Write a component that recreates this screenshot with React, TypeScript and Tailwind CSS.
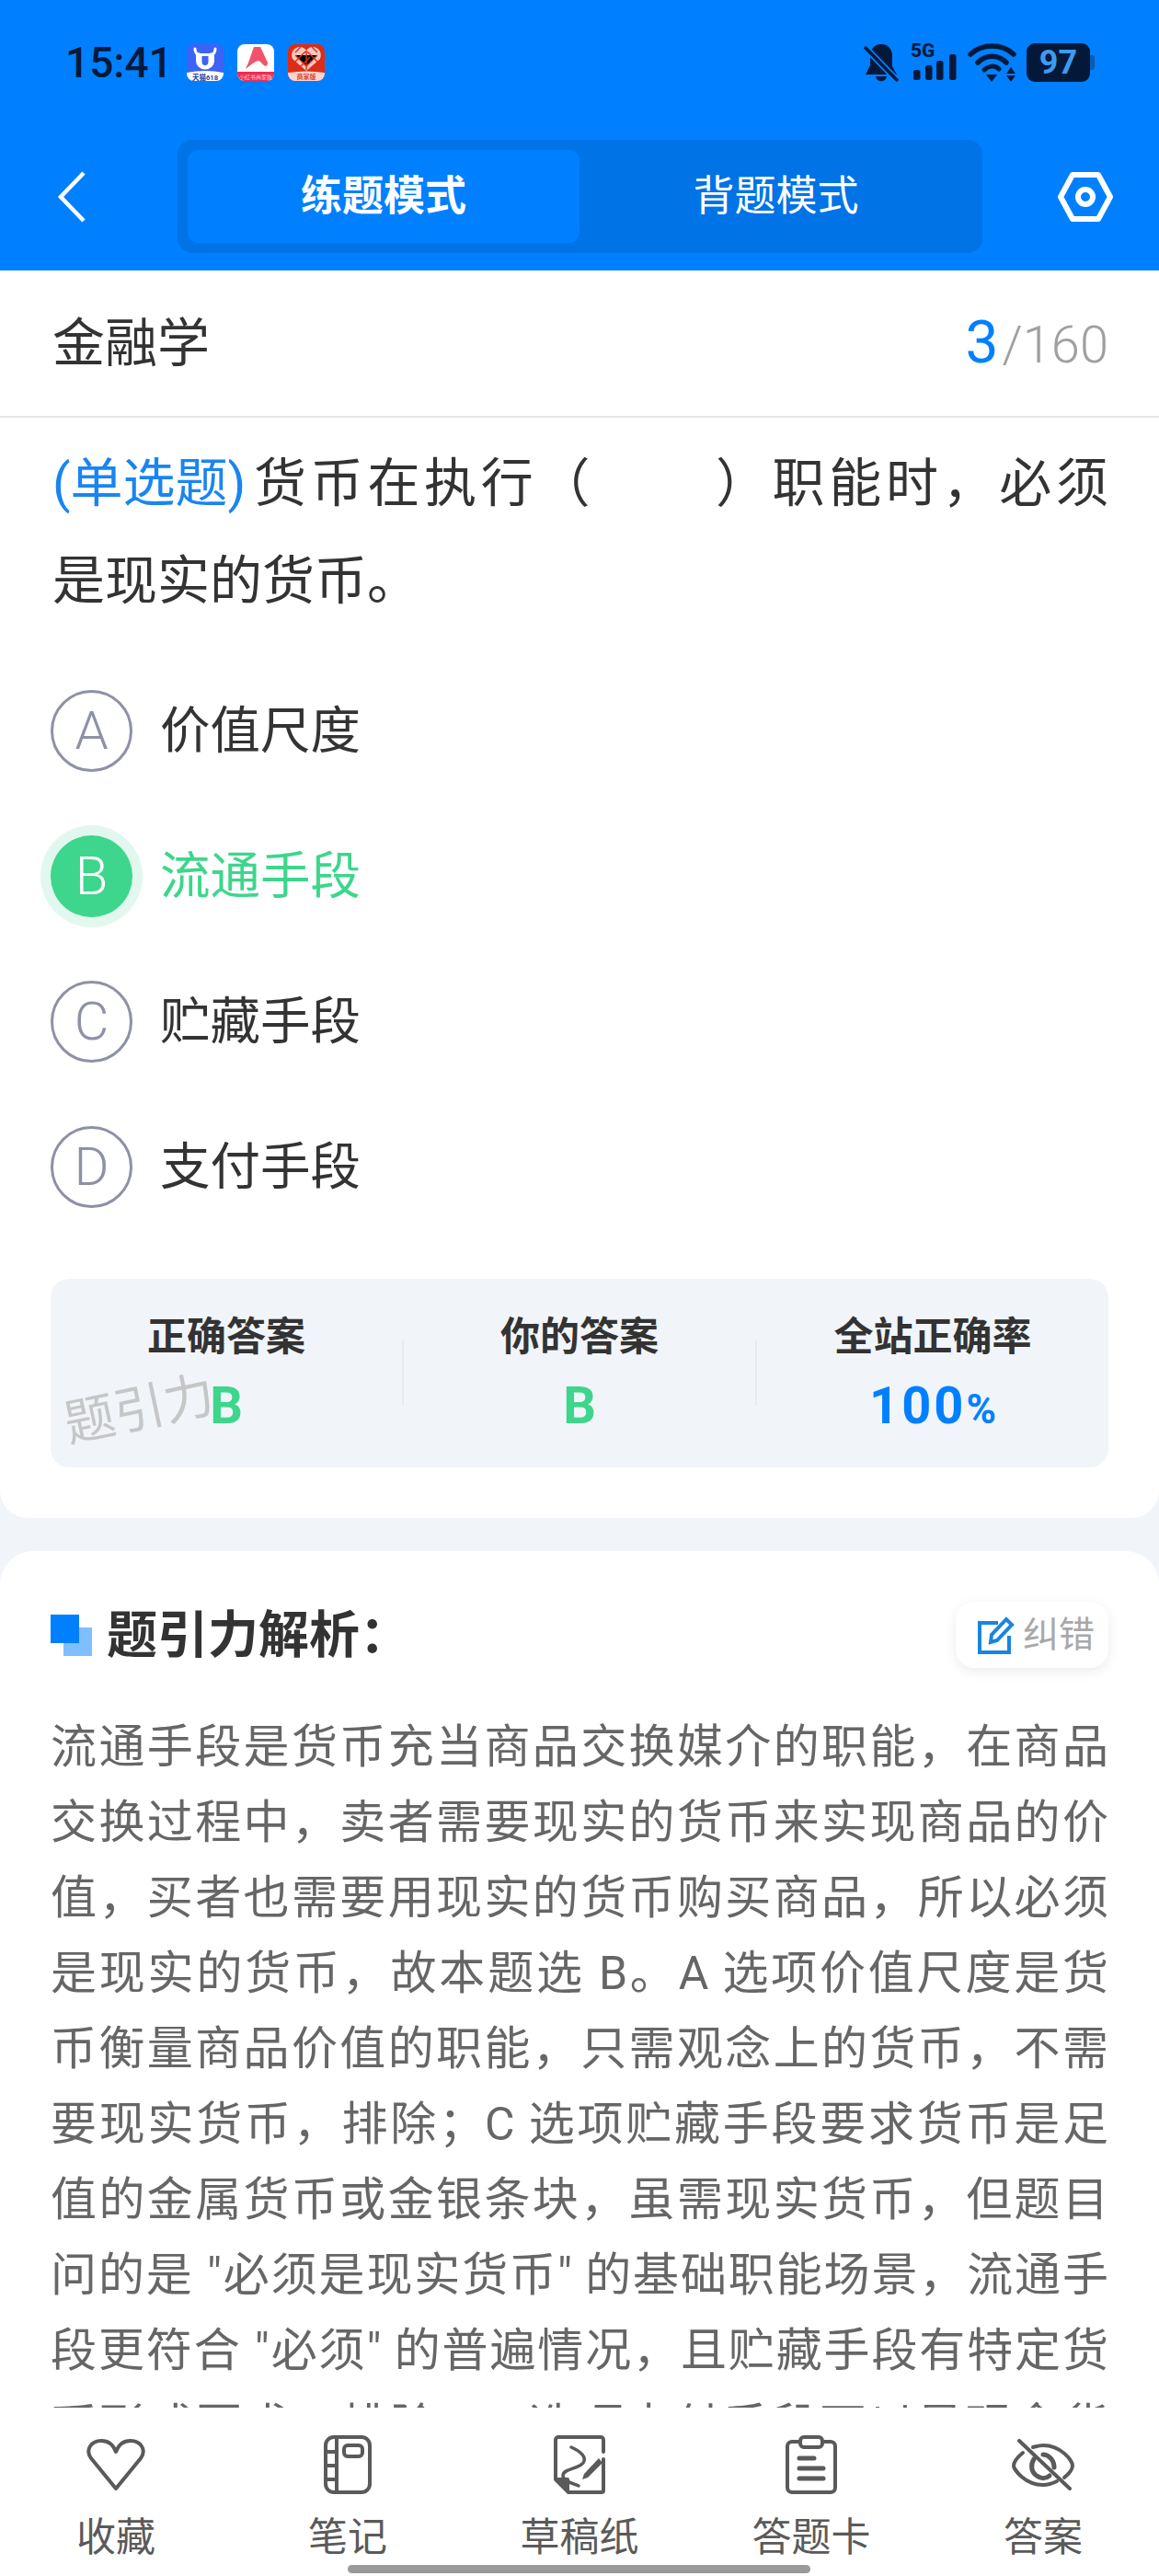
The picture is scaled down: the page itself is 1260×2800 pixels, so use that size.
import React from "react";

const explanation = [
  "流通手段是货币充当商品交换媒介的职能，在商品",
  "交换过程中，卖者需要现实的货币来实现商品的价",
  "值，买者也需要用现实的货币购买商品，所以必须",
  "是现实的货币，故本题选 B。A 选项价值尺度是货",
  "币衡量商品价值的职能，只需观念上的货币，不需",
  "要现实货币，排除；C 选项贮藏手段要求货币是足",
  "值的金属货币或金银条块，虽需现实货币，但题目",
  "问的是 \"必须是现实货币\" 的基础职能场景，流通手",
  "段更符合 \"必须\" 的普遍情况，且贮藏手段有特定货",
  "币形式要求，排除；D 选项支付手段可以是观念货",
];

function AppIcons() {
  return (
    <div className="flex gap-[15px] ml-[22px]">
      <svg width="40" height="40" viewBox="0 0 40 40">
        <rect width="40" height="40" rx="8" fill="#3d63f6" />
        <path d="M0 31 Q20 27 40 31 V32 a8 8 0 0 1 -8 8 H8 a8 8 0 0 1 -8 -8 Z" fill="#fff" />
        <path d="M9 5 C9 10 12 11 14 11 M31 5 C31 10 28 11 26 11" fill="none" stroke="#fff" strokeWidth="3" strokeLinecap="round" />
        <path d="M10 10 H30 V18 a10 9.5 0 0 1 -20 0 Z" fill="#fff" />
        <path d="M16.500 13 H23.500 V19 a3.500 4 0 0 1 -7 0 Z" fill="#3d63f6" />
        <text x="20" y="38.500" textAnchor="middle" fontSize="7.500" fontWeight="700" fill="#23409e">天猫618</text>
      </svg>
      <svg width="40" height="40" viewBox="0 0 40 40">
        <rect width="40" height="40" rx="8" fill="#fff" />
        <path d="M0 30 H40 V32 a8 8 0 0 1 -8 8 H8 a8 8 0 0 1 -8 -8 Z" fill="#ee2b50" />
        <path d="M18 3 L25 3 L33 20 C33 26 29 24 26 20 C22 15 17 21 9 27 C13 19 15 11 18 3 Z" fill="#f2536a" />
        <text x="20" y="37.500" textAnchor="middle" fontSize="6" fill="#ffd5dc">小红书商家版</text>
      </svg>
      <svg width="40" height="40" viewBox="0 0 40 40">
        <rect width="40" height="40" rx="8" fill="#dc2d18" />
        <path d="M0 31 Q20 28 40 31 V32 a8 8 0 0 1 -8 8 H8 a8 8 0 0 1 -8 -8 Z" fill="#fbd5cf" />
        <path d="M20 29 L5 16 C2 8 8 3 13 3 C16 3 19 5 20 7 C21 5 24 3 27 3 C32 3 38 8 35 16 Z" fill="#f3c9c2" />
        <path d="M14 3 L8 9 M26 3 L32 9 M8 12 L20 24 L32 12 M8 19 L19 8 M32 19 L21 8 M14 24 L24 14 M20 7 V28" stroke="#dc2d18" strokeWidth="1.400" />
        <text x="20" y="38" textAnchor="middle" fontSize="7" fontWeight="700" fill="#d8452f">商家版</text>
      </svg>
    </div>
  );
}

function StatusIcons() {
  const d = "#04193a";
  return (
    <div className="flex items-center ml-auto mr-[70px] h-[42px]">
      <svg width="38" height="42" viewBox="0 0 38 42">
        <path d="M19 1 C27 1 31 7 31 14 V25 L36 34 H2 L7 24 V14 C7 7 11 1 19 1 Z" fill={d} />
        <path d="M13 36 H25 C24 43 14 43 13 36 Z" fill={d} />
        <path d="M2 5 L36 40" stroke="#0080ff" strokeWidth="7" />
        <path d="M1 4 L37 41" stroke={d} strokeWidth="3.500" />
      </svg>
      <div className="relative ml-[13px] w-[50px] h-[42px]">
        <span className="absolute left-0 top-0 text-[21px] leading-[16px] font-extrabold text-[#04193a]">5G</span>
        <svg width="50" height="42" viewBox="0 0 50 42">
          <rect x="3" y="29" width="7.500" height="11" rx="2.500" fill={d} />
          <rect x="16" y="24" width="7.500" height="16" rx="2.500" fill={d} />
          <rect x="28" y="19" width="7.500" height="21" rx="2.500" fill={d} />
          <rect x="42" y="12" width="7.500" height="28" rx="2.500" fill={d} />
        </svg>
      </div>
      <svg width="53" height="42" viewBox="0 0 53 42" className="ml-[12px]">
        <path d="M3 12 C16 0 37 0 50 12" fill="none" stroke={d} strokeWidth="5.500" strokeLinecap="round" />
        <path d="M11 21 C20 12 33 12 42 21" fill="none" stroke={d} strokeWidth="5.500" strokeLinecap="round" />
        <path d="M18 29 C23 24 30 24 34 28" fill="none" stroke={d} strokeWidth="5" strokeLinecap="round" />
        <path d="M20 34 H32 L26 42 Z" fill={d} />
        <path d="M47 26 L52 33 H42 Z M42 35 H52 L47 42 Z" fill={d} />
      </svg>
      <div className="ml-[11px] flex items-center">
        <div className="w-[69px] h-[42px] rounded-[9px] bg-[#04193a] text-[#3d9bf0] text-[36px] leading-[42px] font-bold text-center">97</div>
        <div className="w-[5px] h-[16px] rounded-r-[3px] bg-[#0a5cb0]" />
      </div>
    </div>
  );
}

function Option({ letter, text, selected }: { letter: string; text: string; selected?: boolean }) {
  return (
    <div className="h-[158px] flex items-center">
      {selected ? (
        <div className="w-[89px] h-[89px] rounded-full bg-[#3dd68c] ring-[11px] ring-[#e2f8ee] flex items-center justify-center text-white text-[58px] font-light">
          {letter}
        </div>
      ) : (
        <div className="w-[89px] h-[89px] rounded-full border-[3px] border-[#8e91a6] flex items-center justify-center text-[#8e91a6] text-[58px] font-light">
          {letter}
        </div>
      )}
      <span className={"ml-[30px] text-[54.500px] leading-none " + (selected ? "text-[#3dd68c]" : "text-[#333333]")}>{text}</span>
    </div>
  );
}

function Stat({ title, children }: { title: string; children: React.ReactNode }) {
  return (
    <div className="flex-1 flex flex-col items-center">
      <div className="mt-[38px] h-[50px] leading-[50px] text-[43px] font-bold text-[#333333]">{title}</div>
      <div className="mt-[22px] h-[56px] leading-[56px] text-[56px] font-bold">{children}</div>
    </div>
  );
}

function NavItem({ label, children }: { label: string; children: React.ReactNode }) {
  return (
    <div className="flex flex-col items-center">
      <div className="h-[64px] flex items-center justify-center">{children}</div>
      <div className="mt-[22px] text-[43px] leading-[50px] text-[#5a5a5a]">{label}</div>
    </div>
  );
}

const stroke = { fill: "none", stroke: "#5a5a5a", strokeWidth: 4, strokeLinecap: "round" as const, strokeLinejoin: "round" as const };

export default function App() {
  return (
    <div className="w-[1260px] h-[2800px] relative overflow-hidden flex flex-col bg-[#f1f5f9] font-[Roboto,'Noto_Sans_CJK_SC',sans-serif]">
      <header className="shrink-0 h-[294px] bg-[#0080ff]">
        <div className="h-[152px] pt-[47px] pl-[71px]">
          <div className="flex items-center h-[42px]">
            <span className="text-[46px] leading-[42px] font-medium text-[#04193a] w-[110px]">15:41</span>
            <AppIcons />
            <StatusIcons />
          </div>
        </div>
        <div className="flex items-center h-[123px] relative">
          <svg width="32" height="56" viewBox="0 0 32 56" className="ml-[62px]" fill="none" stroke="#fff" strokeWidth="4.500">
            <path d="M29 2 L4 28 L29 54" />
          </svg>
          <div className="ml-[99px] w-[875px] h-[123px] rounded-[16px] bg-[#0073e6] p-[11px] flex text-white text-[45px]">
            <div className="w-[426px] h-[101px] rounded-[12px] bg-[#0080ff] flex items-center justify-center font-bold">练题模式</div>
            <div className="flex-1 flex items-center justify-center">背题模式</div>
          </div>
          <svg width="60" height="54" viewBox="0 0 60 54" className="ml-[82px]" fill="none" stroke="#fff" strokeWidth="6" strokeLinejoin="round">
            <path d="M16 3 H44 L57 27 L44 51 H16 L3 27 Z" />
            <circle cx="30" cy="27" r="8" />
          </svg>
        </div>
      </header>

      <main className="flex-1 min-h-0 overflow-hidden">
        <section className="bg-white rounded-b-[30px] pb-[55px]">
          <div className="h-[160px] border-b-2 border-[#e5e5e5] px-[55px] flex items-center justify-between">
            <span className="ml-[2px] mt-[2px] text-[57px] text-[#333333]">金融学</span>
            <span className="flex items-baseline">
              <span className="text-[64px] text-[#0080ff]">3</span>
              <span className="ml-[4px] text-[56px] font-light text-[#a0a0a0]">/160</span>
            </span>
          </div>
          <div className="px-[55px] pt-[19px]">
            <div className="pl-[2px] text-[57px] leading-[106px] text-[#333333]">
              <div className="text-justify [text-align-last:justify]">
                <span className="inline-block mr-[4px] text-[#1a85f0]">(单选题)</span>货币在执行（&nbsp;&nbsp;&nbsp;&nbsp;&nbsp;&nbsp;&nbsp;）职能时，必须
              </div>
              <div>是现实的货币。</div>
            </div>
            <div className="mt-[30px]">
              <Option letter="A" text="价值尺度" />
              <Option letter="B" text="流通手段" selected />
              <Option letter="C" text="贮藏手段" />
              <Option letter="D" text="支付手段" />
            </div>
            <div className="relative mt-[43px] h-[205px] rounded-[20px] bg-[#f1f5f9] flex">
              <Stat title="正确答案"><span className="text-[#3dd68c]">B</span></Stat>
              <div className="w-[2px] h-[71px] mt-[67px] bg-[#e7ebef]" />
              <Stat title="你的答案"><span className="text-[#3dd68c]">B</span></Stat>
              <div className="w-[2px] h-[71px] mt-[67px] bg-[#e7ebef]" />
              <Stat title="全站正确率">
                <span className="text-[#0080ff] tracking-[3px]">100<span className="text-[44px] tracking-normal">%</span></span>
              </Stat>
              <div className="absolute left-[14px] top-[112px] -rotate-[12deg] text-[55px] leading-[60px] text-[#c6c6c6] whitespace-nowrap">题引力</div>
            </div>
          </div>
        </section>

        <section className="mt-[36px] bg-white rounded-t-[36px] px-[55px] pt-[55px]">
          <div className="flex items-center h-[72px]">
            <div className="relative w-[45px] h-[45px] shrink-0">
              <div className="absolute left-[14px] top-[14px] w-[31px] h-[31px] bg-[#80bfff]" />
              <div className="absolute left-0 top-0 w-[31px] h-[31px] bg-[#0080ff]" />
            </div>
            <span className="ml-[16px] text-[55px] font-bold text-[#333333]">题引力解析：</span>
            <div className="ml-auto w-[166px] h-[72px] rounded-[20px] bg-white shadow-[0_4px_14px_rgba(0,0,0,0.08)] flex items-center pl-[24px]">
              <svg width="40" height="41" viewBox="0 0 40 41" fill="none" stroke="#1a85e0" strokeWidth="4">
                <path d="M22 7 H2 V39 H34 V21" />
                <path d="M14 28 L15 20 L31 3 L37 9 L21 26 Z" />
              </svg>
              <span className="ml-[9px] text-[39px] leading-none text-[#a8a8a8]">纠错</span>
            </div>
          </div>
          <div className="mt-[45px] text-[50px] leading-[82px] text-[#666666]">
            {explanation.map((line) => (
              <div key={line} className="text-justify [text-align-last:justify] whitespace-nowrap">{line}</div>
            ))}
          </div>
        </section>
      </main>

      <nav className="shrink-0 h-[183px] bg-white pt-[30px] grid grid-cols-5">
        <NavItem label="收藏">
          <svg width="64" height="56" viewBox="0 0 64 56" {...stroke}>
            <path d="M32 54 L5 21 C-2 11 6 2 16 2 C23 2 29 6 32 14 C35 6 41 2 48 2 C58 2 66 11 59 21 Z" />
          </svg>
        </NavItem>
        <NavItem label="笔记">
          <svg width="52" height="64" viewBox="0 0 52 64" {...stroke}>
            <rect x="2" y="2" width="48" height="60" rx="9" />
            <path d="M14 2 V62 M2 18 H14 M2 33 H14 M2 48 H14" />
            <rect x="22" y="11" width="20" height="12" rx="4" />
          </svg>
        </NavItem>
        <NavItem label="草稿纸">
          <svg width="56" height="64" viewBox="0 0 56 64" {...stroke}>
            <path d="M54 26 V60 a2 2 0 0 1 -2 2 H16 L2 48 V5 a3 3 0 0 1 3 -3 H51 a3 3 0 0 1 3 3 V18" />
            <path d="M3 48 H15 V60 Z" fill="#5a5a5a" />
            <path d="M19 13 C30 18 36 24 32 30 C27 37 10 36 10 44 C10 50 20 52 27 55" strokeWidth="3.500" />
            <path d="M33 42 L49 25 L53 30 L37 46 L31 48 Z" fill="#5a5a5a" stroke="none" />
          </svg>
        </NavItem>
        <NavItem label="答题卡">
          <svg width="56" height="64" viewBox="0 0 56 64" {...stroke}>
            <path d="M14 7 H8 a5 5 0 0 0 -6 5 V57 a5 5 0 0 0 5 5 H49 a5 5 0 0 0 5 -5 V12 a5 5 0 0 0 -6 -5 H42" />
            <rect x="16" y="2" width="24" height="11" rx="4" />
            <path d="M15 25 H31 M15 36 H41 M15 47 H41" strokeWidth="5" />
          </svg>
        </NavItem>
        <NavItem label="答案">
          <svg width="68" height="56" viewBox="0 0 68 56" {...stroke}>
            <path d="M12 15 C6 20 2 25 2 29 C2 33 14 50 34 50 C40 50 45 48 49 46 M23 9 C27 8 30 7 34 7 C54 7 66 24 66 29 C66 33 62 38 57 42" />
            <path d="M24 22 C20 28 21 36 27 40 C32 44 38 43 41 40 M34 17 C40 17 46 23 46 31" strokeWidth="5" />
            <path d="M8 2 L63 54" />
          </svg>
        </NavItem>
      </nav>

      <div className="absolute left-[378px] top-[2788px] w-[503px] h-[9px] rounded-full bg-[#9a9a9a]" />
    </div>
  );
}
